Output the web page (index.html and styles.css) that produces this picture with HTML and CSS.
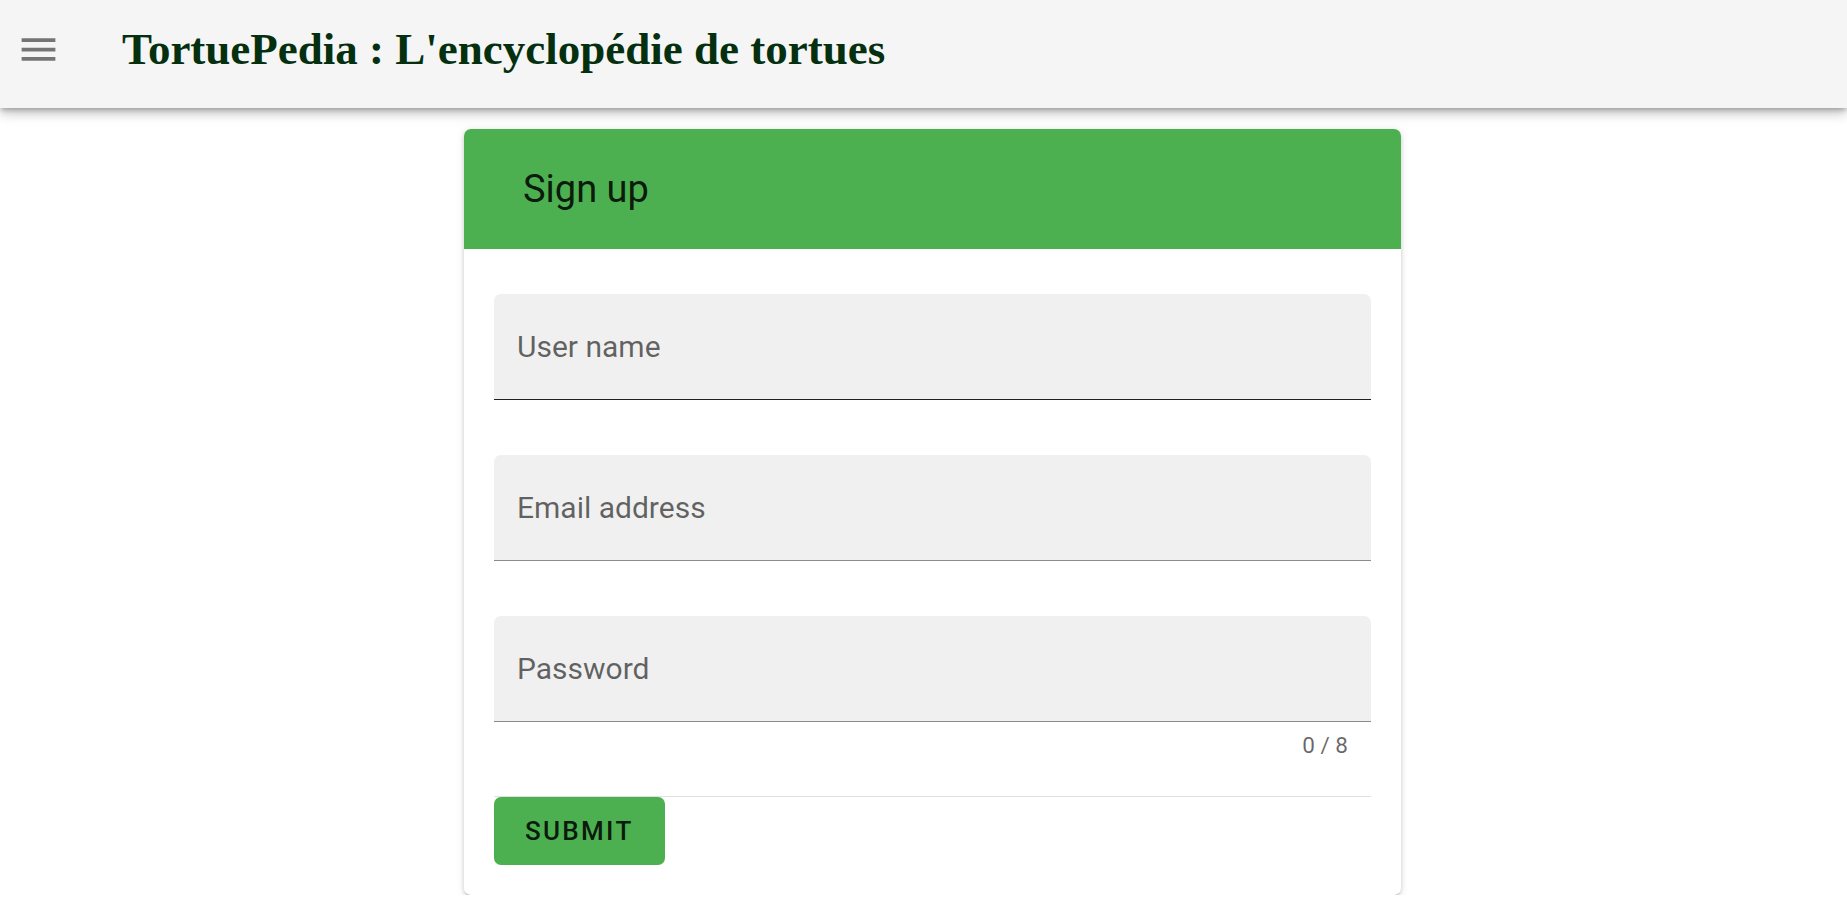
FILE: index.html
```html
<!DOCTYPE html>
<html lang="fr">
<head>
<meta charset="utf-8">
<title>TortuePedia</title>
<link rel="stylesheet" href="styles.css">
</head>
<body>
<header class="topbar">
  <button class="menu-btn" aria-label="menu">
    <svg class="menu-icon" viewBox="0 0 24 24" width="45" height="45"><path d="M3 18h18v-2H3v2zm0-5h18v-2H3v2zm0-7v2h18V6H3z"/></svg>
  </button>
  <h1 class="site-title">TortuePedia : L'encyclopédie de tortues</h1>
</header>
<main class="main">
  <section class="card">
    <div class="card-title">Sign up</div>
    <form class="card-body">
      <div class="field-block">
        <div class="field field-active"><label class="field-label">User name</label></div>
        <div class="field-details"></div>
      </div>
      <div class="field-block">
        <div class="field"><label class="field-label">Email address</label></div>
        <div class="field-details"></div>
      </div>
      <div class="field-block">
        <div class="field"><label class="field-label">Password</label></div>
        <div class="field-details"><span class="counter">0 / 8</span></div>
      </div>
      <hr class="divider">
      <div class="actions">
        <button type="button" class="submit-btn">Submit</button>
      </div>
    </form>
  </section>
</main>
</body>
</html>
```
FILE: styles.css
```css
html, body {
  margin: 0;
  padding: 0;
  background: #ffffff;
}
body {
  font-family: Roboto, "Noto Sans", Arial, sans-serif;
}
.topbar {
  position: relative;
  z-index: 2;
  height: 108px;
  box-sizing: border-box;
  padding: 0 0 10px 16px;
  display: flex;
  align-items: center;
  background: #f5f5f5;
  box-shadow: 0 3px 5px -1px rgba(0,0,0,0.25), 0 6px 10px 0 rgba(0,0,0,0.14), 0 2px 18px 0 rgba(0,0,0,0.10);
}
.menu-btn {
  border: 0;
  background: transparent;
  padding: 0;
  margin: 0;
  width: 45px;
  height: 45px;
  display: flex;
}
.menu-icon {
  fill: #757575;
}
.site-title {
  margin: 0 0 0 61px;
  font-family: "Liberation Serif", "Times New Roman", serif;
  font-weight: bold;
  font-size: 45px;
  line-height: 45px;
  color: #053010;
}
.main {
  display: flex;
  justify-content: center;
  padding: 21px 0 0 18px;
}
.card {
  width: 937px;
  background: #fff;
  border-radius: 7px;
  overflow: hidden;
  box-shadow: 0 3px 2px -2px rgba(0,0,0,0.25), 0 2px 4px 0 rgba(0,0,0,0.14), 0 1px 9px 0 rgba(0,0,0,0.10);
}
.card-title {
  height: 120px;
  box-sizing: border-box;
  padding-left: 59px;
  display: flex;
  align-items: center;
  background: #4caf50;
  color: rgba(0,0,0,0.87);
  font-size: 38px;
  line-height: 38px;
}
.card-body {
  margin: 0;
  padding: 45px 30px 30px;
  display: flex;
  flex-direction: column;
}
.field-block {
  display: flex;
  flex-direction: column;
  height: 161px;
}
.field {
  height: 106px;
  box-sizing: border-box;
  background: #f0f0f0;
  border-radius: 7px 7px 0 0;
  border-bottom: 1px solid rgba(0,0,0,0.42);
  padding: 0 23px;
  display: flex;
  align-items: center;
}
.field-active {
  border-bottom-color: rgba(0,0,0,0.87);
}
.field-label {
  font-size: 30px;
  line-height: 30px;
  color: rgba(0,0,0,0.6);
}
.field-details {
  flex: 1;
  display: flex;
  justify-content: flex-end;
  padding: 12px 23px 0;
}
.counter {
  font-size: 22.5px;
  line-height: 22.5px;
  color: rgba(0,0,0,0.6);
}
.divider {
  margin: 19px 0 0;
  border: 0;
  height: 1px;
  background: rgba(0,0,0,0.12);
}
.actions {
  display: flex;
}
.submit-btn {
  height: 68px;
  padding: 0 31px;
  border: 0;
  border-radius: 7px;
  background: #4caf50;
  color: rgba(0,0,0,0.87);
  font-family: Roboto, "Noto Sans", Arial, sans-serif;
  font-weight: 500;
  font-size: 26px;
  letter-spacing: 2.3px;
  text-transform: uppercase;
}
```
